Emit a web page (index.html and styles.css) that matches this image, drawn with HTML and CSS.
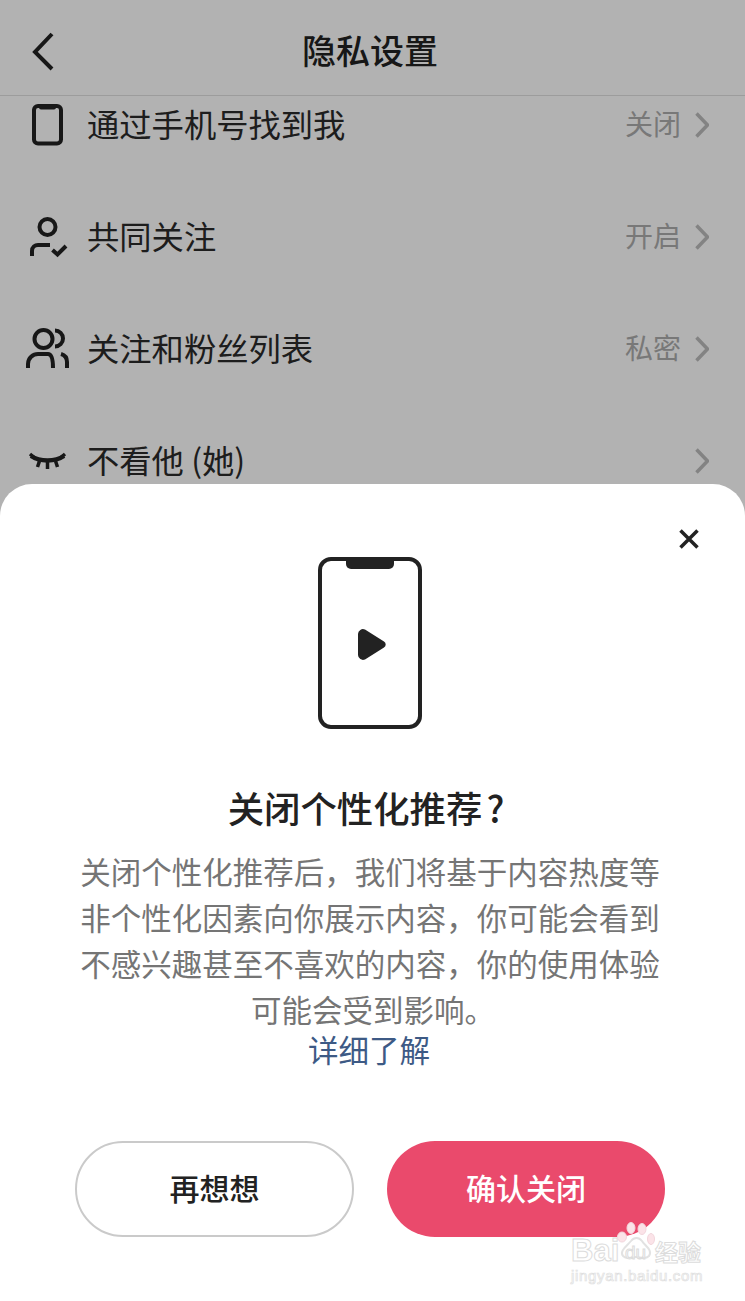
FILE: index.html
```html
<!DOCTYPE html>
<html>
<head>
<meta charset="UTF-8">
<meta name="viewport" content="width=745">
<title>隐私设置</title>
<link rel="stylesheet" href="styles.css">
</head>
<body>
<div class="page">

<header class="nav">
<svg class="back" width="48" height="48" viewBox="0 0 48 48"><path d="M28 7L11 25l17 17"/></svg>
<h1>隐私设置</h1>
</header>

<ul class="list">
<li class="row">
<svg class="icon" width="48" height="48" viewBox="0 0 48 48"><rect x="10" y="5" width="27" height="37.500" rx="4"/><path class="fill" d="M15 4h17v2.500a2 2 0 0 1-2 2H17a2 2 0 0 1-2-2z"/></svg>
<span class="label">通过手机号找到我</span>
<span class="value">关闭</span>
<svg class="chev" width="14" height="26" viewBox="0 0 14 26"><path d="M1.500 1.500L12.500 13 1.500 24.500"/></svg>
</li>
<li class="row">
<svg class="icon" width="48" height="48" viewBox="0 0 48 48"><circle cx="23.500" cy="14" r="8"/><path d="M8 43v-5c0-4 3-6 6-6h12"/><path d="M28.500 37l5 4.500 8.500-8.500"/></svg>
<span class="label">共同关注</span>
<span class="value">开启</span>
<svg class="chev" width="14" height="26" viewBox="0 0 14 26"><path d="M1.500 1.500L12.500 13 1.500 24.500"/></svg>
</li>
<li class="row">
<svg class="icon" width="48" height="48" viewBox="0 0 48 48"><circle cx="19.500" cy="14" r="9"/><path d="M31 5.500c4.500 0 8 3.500 8 8s-3.500 8-8 8"/><path d="M4 43v-4c0-6 5-10 10-10h10c4 0 5 6 5 14"/><path d="M37 29c3.500 1 6 4 6 8v6"/></svg>
<span class="label">关注和粉丝列表</span>
<span class="value">私密</span>
<svg class="chev" width="14" height="26" viewBox="0 0 14 26"><path d="M1.500 1.500L12.500 13 1.500 24.500"/></svg>
</li>
<li class="row">
<svg class="icon" width="48" height="48" viewBox="0 0 48 48"><path class="lid" d="M7 19c9 6 24 6 33 0"/><path class="lash" d="M6 17l6 5M15.500 24l-2 6M23.500 25v7M31.500 24l2 6M41 17l-6 5"/></svg>
<span class="label">不看他 (她)</span>
<svg class="chev" width="14" height="26" viewBox="0 0 14 26"><path d="M1.500 1.500L12.500 13 1.500 24.500"/></svg>
</li>
</ul>

<div class="mask"></div>

<section class="sheet">
<svg class="close" width="20" height="20" viewBox="0 0 20 20"><path d="M1.500 1.500l17 17M18.500 1.500l-17 17"/></svg>

<svg class="phone" width="104" height="172" viewBox="0 0 104 172">
<rect x="2" y="2" width="100" height="168" rx="11"/>
<path class="fill" d="M28 2h48v5a5 5 0 0 1-5 5H33a5 5 0 0 1-5-5z"/>
<path class="fill" d="M40 77a5 5 0 0 1 7-4.500l19 12a3.500 3.500 0 0 1 0 6l-19 12a5 5 0 0 1-7-4.500z"/>
</svg>

<h2>关闭个性化推荐<span class="qmark">?</span></h2>
<p class="desc">关闭个性化推荐后，我们将基于内容热度等<br>非个性化因素向你展示内容，你可能会看到<br>不感兴趣甚至不喜欢的内容，你的使用体验<br><span class="desc-last">可能会受到影响。</span></p>
<a class="more" href="#">详细了解</a>

<div class="actions">
<button class="btn btn-plain">再想想</button>
<button class="btn btn-main">确认关闭</button>
</div>
</section>

<div class="mark">
<div class="mark-top">
<span class="mark-bai">Bai</span>
<svg class="paw" width="38" height="38" viewBox="0 0 38 38">
<ellipse class="toe" cx="14" cy="6" rx="4" ry="5.500"/>
<ellipse class="toe" cx="25" cy="7" rx="4" ry="5.500"/>
<ellipse class="toe" cx="5" cy="15" rx="4.500" ry="5"/>
<ellipse class="toe" cx="34" cy="17" rx="3.500" ry="5.500"/>
<path d="M6 34c-4-5 4-10 8-15 3-4 8-4 11 0 3 5 11 9 7 15-4 4-9 1-13 1s-9 3-13-1z"/>
</svg>
<span class="mark-du">du</span>
<span class="mark-cn">经验</span>
</div>
<div class="mark-url">jingyan.baidu.com</div>
</div>

</div>
</body>
</html>
```

FILE: styles.css
```css
html, body { margin: 0; padding: 0; }
body {
    width: 745px;
    overflow: hidden;
    background: #fff;
    color: #222;
    font-family: "Noto Sans CJK SC", "Noto Sans", sans-serif;
}
svg { display: block; fill: none; stroke: #222; }
svg .fill { fill: #222; stroke: none; }

.page {
    position: relative;
    height: 1301px;
    overflow: hidden;
    background: #fff;
}

/* top bar */
.nav {
    position: relative;
    z-index: 1;
    display: grid;
    grid-template-columns: 1fr auto 1fr;
    align-items: center;
    height: 95px;
    padding-right: 5px;
    border-bottom: 1px solid #e0e0e0;
    background: #fff;
}
.nav h1 {
    grid-column: 2;
    grid-row: 1;
    margin: 4px 0 0;
    font-size: 34px;
    font-weight: 500;
    line-height: 46px;
    color: #222;
}
.back {
    grid-column: 1;
    grid-row: 1;
    margin: 6px 0 0 24px;
    stroke-width: 4;
}

/* rows */
.list {
    list-style: none;
    margin: -27px 0 0;
    padding: 0 36px 0 24px;
}
.row {
    display: flex;
    align-items: center;
    height: 112px;
}
.icon { flex: none; margin-right: 15px; stroke-width: 4; }
.icon .lid { stroke-width: 4.500; }
.icon .lash { stroke-width: 3.500; }
.label { flex: 1; padding-bottom: 4px; font-size: 32.300px; line-height: 46px; color: #2a2a2a; }
.value { padding-bottom: 4px; font-size: 28px; color: #acacac; margin-right: 14px; }
.chev { flex: none; stroke: #bcbcbc; stroke-width: 3.500; }

.mask {
    position: absolute;
    inset: 0;
    z-index: 2;
    background: rgba(0, 0, 0, 0.3);
}

/* bottom sheet */
.sheet {
    position: absolute;
    z-index: 3;
    left: 0;
    right: 0;
    top: 484px;
    bottom: 0;
    display: flex;
    flex-direction: column;
    align-items: center;
    padding: 73px 80px 0 75px;
    background: #fff;
    border-radius: 32px 32px 0 0;
}
.close {
    position: absolute;
    top: 45px;
    right: 46px;
    stroke-width: 3.500;
}
.phone { stroke-width: 4; }
.sheet h2 {
    margin: 55px 0 0;
    padding-right: 8px;
    font-size: 36.400px;
    font-weight: 500;
    line-height: 46px;
    color: #222;
}
.qmark { margin-left: 4px; }
.desc {
    margin: 18px 0 0;
    font-size: 30.500px;
    line-height: 46px;
    text-align: center;
    white-space: nowrap;
    color: #757575;
}
.desc-last { padding-left: 6px; }
.more {
    padding-right: 2px;
    font-size: 30.500px;
    line-height: 34px;
    color: #3d5a85;
    text-decoration: none;
}
.actions {
    display: flex;
    gap: 33px;
    width: 590px;
    margin-top: 75px;
}
.btn {
    height: 96px;
    padding: 0 0 4px;
    border-radius: 48px;
    font-family: inherit;
    font-size: 30px;
    font-weight: 500;
}
.btn-plain { flex: 0 0 279px; background: #fff; border: 2px solid #cacaca; color: #222; }
.btn-main { flex: 0 0 278px; background: #ea4a6c; border: 0; color: #fff; }

/* watermark */
.mark {
    position: absolute;
    z-index: 4;
    left: 571px;
    top: 1222px;
    width: 135px;
    color: #fff;
}
.mark-top { position: relative; height: 46px; }
.mark-top span {
    position: absolute;
    -webkit-text-stroke: 1px #dcdcdc;
    color: rgba(255, 255, 255, 0.6);
    font-family: "Liberation Sans", sans-serif;
}
.mark-bai { left: 0; top: 13px; font-size: 31px; line-height: 32px; font-weight: 700; }
.mark-du { left: 54px; top: 20px; font-size: 19px; line-height: 22px; }
.mark-top .mark-cn {
    left: 84px;
    top: 16px;
    font-family: "Noto Sans CJK SC", sans-serif;
    font-size: 23px;
    line-height: 26px;
    font-weight: 700;
}
.paw { position: absolute; left: 46px; top: 0; stroke: #e2e2e2; stroke-width: 2; }
.paw .toe { fill: #fbe3e8; stroke: #f2d6dc; stroke-width: 1; }
.mark-url {
    font-family: "Liberation Sans", sans-serif;
    font-size: 15px;
    line-height: 16px;
    letter-spacing: 0.660px;
    white-space: nowrap;
    color: rgba(255, 255, 255, 0.5);
    -webkit-text-stroke: 0.7px #dedede;
}
```
